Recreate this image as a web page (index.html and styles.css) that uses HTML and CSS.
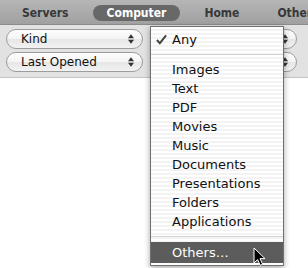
FILE: index.html
```html
<!DOCTYPE html>
<html lang="en">
<head>
    <meta charset="UTF-8">
    <title>Find - Kind</title>
    <link rel="stylesheet" href="styles.css">
</head>
<body>
    <div class="finder">
        <div class="tabs">
            <span class="tab">Servers</span>
            <span class="tab active">Computer</span>
            <span class="tab">Home</span>
            <span class="tab">Others</span>
        </div>

        <div class="filters">
            <div class="popup"><span>Kind</span><svg class="arrows" viewBox="0 0 7 11"><path d="M0 4.5 3.5 0 7 4.5zM0 6.5 3.5 11 7 6.5z"/></svg></div>
            <div class="popup"><span></span><svg class="arrows" viewBox="0 0 7 11"><path d="M0 4.5 3.5 0 7 4.5zM0 6.5 3.5 11 7 6.5z"/></svg></div>
            <div class="popup"><span>Last Opened</span><svg class="arrows" viewBox="0 0 7 11"><path d="M0 4.5 3.5 0 7 4.5zM0 6.5 3.5 11 7 6.5z"/></svg></div>
            <div class="popup"><span></span><svg class="arrows" viewBox="0 0 7 11"><path d="M0 4.5 3.5 0 7 4.5zM0 6.5 3.5 11 7 6.5z"/></svg></div>
        </div>

        <div class="results"></div>

        <!-- menu opened from the Kind popup -->
        <ul class="menu">
            <li class="checked"><svg class="check" viewBox="0 0 12 12"><path d="M1 6.5 4.2 10 11 1.5" /></svg>Any</li>
            <li class="sep"></li>
            <li>Images</li>
            <li>Text</li>
            <li>PDF</li>
            <li>Movies</li>
            <li>Music</li>
            <li>Documents</li>
            <li>Presentations</li>
            <li>Folders</li>
            <li>Applications</li>
            <li class="sep"></li>
            <li class="selected">Others…</li>
        </ul>

        <svg class="cursor" viewBox="0 0 13 19"><path d="M1 1v15l3.6-3.5 2.6 5.8 2.4-1.1-2.6-5.6H12z"/></svg>
    </div>
</body>
</html>
```

FILE: styles.css
```css
:root {
    --bar-top: #b6b6b6;
    --bar-bottom: #a0a0a0;
    --panel: #e2e2e2;
    --pill: #686868;
    --menu-border: #707070;
    --highlight: #5c5c5c;
    --text: #111;
}

body {
    margin: 0;
    background: #fff;
}

.finder {
    position: relative;
    width: 308px;
    height: 268px;
    overflow: hidden;
    font-family: "DejaVu Sans", sans-serif;
    color: var(--text);
}

.tabs {
    display: flex;
    gap: 10px;
    height: 25px;
    padding-left: 8px;
    align-items: center;
    background: linear-gradient(var(--bar-top), var(--bar-bottom));
    border-bottom: 1px solid #8c8c8c;
    box-sizing: border-box;
    white-space: nowrap;
}

.tab {
    font-family: "DejaVu Sans Condensed", "DejaVu Sans", sans-serif;
    font-weight: bold;
    font-size: 12px;
    line-height: 16px;
    padding: 0 14px;
    border-radius: 8px;
    color: #383838;
    margin-top: 1px;
}

.tab.active {
    background: var(--pill);
    color: #fff;
}

.filters {
    display: grid;
    grid-template-columns: 137px 140px;
    column-gap: 14px;
    row-gap: 3px;
    padding: 4px 6px 5px;
    background: var(--panel);
    border-bottom: 1px solid #c4c4c4;
}

.popup {
    display: flex;
    justify-content: space-between;
    align-items: center;
    height: 20px;
    box-sizing: border-box;
    padding: 0 8px 0 14px;
    border: 1px solid #9c9c9c;
    border-radius: 10px;
    background: linear-gradient(#fdfdfd, #f4f4f4 50%, #e6e6e6 51%, #f2f2f2);
    font-size: 12px;
}

.popup .arrows {
    width: 6px;
    height: 10px;
    fill: #333;
}

.results {
    height: 190px;
}

.menu {
    position: absolute;
    left: 150px;
    top: 26px;
    width: 134px;
    box-sizing: border-box;
    margin: 0;
    padding: 3px 0 2px;
    list-style: none;
    border: 1px solid var(--menu-border);
    background: repeating-linear-gradient(#fff 0 2px, #f3f3f3 2px 4px);
    box-shadow: 0 2px 6px rgba(0, 0, 0, 0.35);
    font-size: 13px;
    line-height: 19px;
}

.menu li {
    padding-left: 21px;
}

.menu .check {
    width: 11px;
    height: 11px;
    margin-left: -16px;
    margin-right: 5px;
    fill: none;
    stroke: #444;
    stroke-width: 2.2;
    vertical-align: -1px;
}

.menu .sep {
    height: 1px;
    margin: 5px 0;
    padding: 0;
    background: #d4d4d4;
}

.menu .selected {
    padding-top: 1px;
    padding-bottom: 1px;
    background: var(--highlight);
    color: #fff;
}

.cursor {
    position: absolute;
    left: 253px;
    top: 247px;
    width: 13px;
    height: 19px;
    fill: #000;
    stroke: #fff;
    stroke-width: 1;
}
```
